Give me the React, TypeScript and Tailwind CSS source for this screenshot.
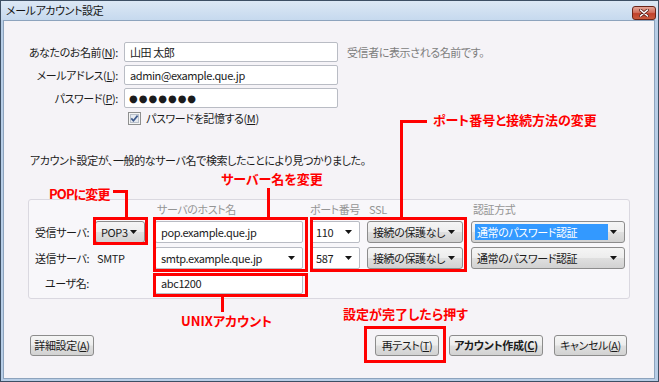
import React from 'react';

const JP = "font-['Noto_Sans_CJK_JP','Noto_Sans_CJK_SC',sans-serif] [font-feature-settings:'palt']";
const BTN =
  'bg-[linear-gradient(to_bottom,#f5f5f5_0%,#ededed_48%,#dfdfdf_52%,#d2d2d2_100%)] border border-[#8c8c8c] rounded-[3px]';
const BOX = 'bg-white border border-[#b9bcc4] rounded-[2px]';

function Arrow() {
  return (
    <svg width="7" height="4" viewBox="0 0 7 4" className="shrink-0">
      <path d="M0 0H7L3.5 4Z" fill="#151515" />
    </svg>
  );
}

function Combo({ text, className, plain }: { text: string; className: string; plain?: boolean }) {
  return (
    <div className={`${plain ? BOX : BTN} ${className} flex items-center justify-between pl-[5px] pr-[7px] whitespace-nowrap`}>
      <span>{text}</span>
      <Arrow />
    </div>
  );
}

function Button({ children, className }: { children: React.ReactNode; className: string }) {
  return (
    <div className={`${BTN} ${className} h-[21px] flex items-center justify-center whitespace-nowrap`}>{children}</div>
  );
}

export default function App() {
  return (
    <div className={`${JP} relative w-[659px] h-[382px] bg-[#b7cde6] border border-[#3d4f64] flex flex-col overflow-hidden text-[11px] tracking-[-0.4px] text-[#1b1b1b] whitespace-nowrap`}>
      {/* title bar */}
      <div className="h-[19px] shrink-0 flex items-center justify-between pl-[5px] pr-[2px] bg-[linear-gradient(to_bottom,#dce8f5,#c6d9ee)]">
        <span className="text-[11px] text-[#151515] leading-none">メールアカウント設定</span>
        <div className="w-[24px] h-[14px] mt-[4px] rounded-[3px] border border-[#6a2418] bg-[linear-gradient(to_bottom,#e3a597_0%,#d2705e_45%,#c0412c_55%,#c85a3c_100%)] flex items-center justify-center">
          <svg width="10" height="8" viewBox="0 0 10 8">
            <path d="M1.5 1L8.5 7M8.5 1L1.5 7" stroke="#5a2018" strokeWidth="3" strokeLinecap="round" />
            <path d="M1.5 1L8.5 7M8.5 1L1.5 7" stroke="#ffffff" strokeWidth="1.6" strokeLinecap="round" />
          </svg>
        </div>
      </div>

      {/* client area */}
      <div className="flex-1 ml-[2px] mr-[3px] mb-[2px] border border-[#8da3bd] bg-[#f5f3f7] flex flex-col">
        {/* account fields */}
        <div className="mt-[21px] grid grid-cols-[114px_214px_1fr] gap-x-[6px] gap-y-[3px] items-center">
          <div className="text-right">あなたのお名前(<u>N</u>):</div>
          <div className={`${BOX} h-[20px] flex items-center pl-[5px]`}>山田 太郎</div>
          <div className="pl-[3px] text-[#7d7d7d]">受信者に表示される名前です。</div>

          <div className="text-right">メールアドレス(<u>L</u>):</div>
          <div className={`${BOX} h-[20px] flex items-center pl-[5px]`}>admin@example.que.jp</div>
          <div />

          <div className="text-right">パスワード(<u>P</u>):</div>
          <div className={`${BOX} h-[20px] flex items-center pl-[4px] font-['DejaVu_Sans',sans-serif] text-[10px] tracking-[1px]`}>●●●●●●●</div>
          <div />

          <div />
          <div className="flex items-center gap-[5px] pl-[4px] h-[14px]">
            <svg width="13" height="13" viewBox="0 0 13 13" className="shrink-0">
              <rect x="0.5" y="0.5" width="12" height="12" fill="#f4f4f4" stroke="#8e8f8f" />
              <rect x="2.5" y="2.5" width="8" height="8" fill="#e6eaf0" stroke="#b9c0ca" />
              <path d="M3.3 6.4L5.4 8.8L9.6 3.6" fill="none" stroke="#3e5a8c" strokeWidth="1.7" />
            </svg>
            <span>パスワードを記憶する(<u>M</u>)</span>
          </div>
          <div />
        </div>

        <div className="mt-[27px] pl-[26px] leading-[16px]">
          アカウント設定が、一般的なサーバ名で検索したことにより見つかりました。
        </div>

        {/* server group */}
        <div className="mt-[31px] mx-[24px] h-[100px] border border-[#dad8e0] rounded-[3px] bg-[#f8f7fa] pt-[2px] pl-[6px]">
          <div className="grid grid-cols-[60px_60px_155px_57px_104px_154px] grid-rows-[15px_22px_22px_21px] gap-y-[4px] items-center">
            <div />
            <div />
            <div className="pl-[2px] text-[#959595]">サーバのホスト名</div>
            <div className="text-[#959595]">ポート番号</div>
            <div className="pl-[2px] text-[#959595]">SSL</div>
            <div className="pl-[2px] text-[#959595]">認証方式</div>

            <div>受信サーバ:</div>
            <Combo text="POP3" className="w-[50px] h-[22px]" />
            <div className={`${BOX} w-[148px] h-[22px] flex items-center pl-[5px]`}>pop.example.que.jp</div>
            <Combo text="110" plain className="w-[50px] h-[22px] pl-[2px]" />
            <Combo text="接続の保護なし" className="w-[96px] h-[22px]" />
            <div className={`${BTN} w-[154px] h-[22px] flex items-center justify-between pl-[3px] pr-[7px]`}>
              <span className="bg-[#3399ff] text-white w-[133px] h-[16px] flex items-center pl-[2px]">通常のパスワード認証</span>
              <Arrow />
            </div>

            <div>送信サーバ:</div>
            <div className="pl-[2px]">SMTP</div>
            <Combo text="smtp.example.que.jp" plain className="w-[148px] h-[22px]" />
            <Combo text="587" plain className="w-[50px] h-[22px] pl-[2px]" />
            <Combo text="接続の保護なし" className="w-[96px] h-[22px]" />
            <Combo text="通常のパスワード認証" className="w-[154px] h-[22px]" />

            <div className="pl-[10px]">ユーザ名:</div>
            <div />
            <div className={`${BOX} w-[148px] h-[21px] flex items-center pl-[5px]`}>abc1200</div>
            <div />
            <div />
            <div />
          </div>
        </div>

        {/* buttons */}
        <div className="mt-[36px] pl-[26px] pr-[27px] flex items-center">
          <Button className="w-[64px]">詳細設定(<u>A</u>)</Button>
          <div className="flex-1" />
          <Button className="w-[64px]">再テスト(<u>T</u>)</Button>
          <Button className="w-[94px] ml-[10px] font-bold">アカウント作成(<u>C</u>)</Button>
          <Button className="w-[73px] ml-[11px]">キャンセル(<u>A</u>)</Button>
        </div>
      </div>

      {/* annotations */}
      <div className="absolute left-[432px] top-[110px] text-[13px] tracking-normal font-bold text-[#ff0000] leading-[18px]">ポート番号と接続方法の変更</div>
      <div className="absolute left-[399px] top-[119px] w-[27px] h-[3px] bg-[#ff0000]" />
      <div className="absolute left-[399px] top-[119px] w-[3px] h-[99px] bg-[#ff0000]" />
      <div className="absolute left-[309px] top-[216px] w-[157px] h-[55px] border-[3px] border-[#ff0000]" />

      <div className="absolute left-[220px] top-[169px] text-[13px] tracking-normal font-bold text-[#ff0000] leading-[18px]">サーバー名を変更</div>
      <div className="absolute left-[266px] top-[187px] w-[3px] h-[30px] bg-[#ff0000]" />
      <div className="absolute left-[152px] top-[216px] w-[155px] h-[55px] border-[3px] border-[#ff0000]" />

      <div className="absolute left-[48px] top-[184px] text-[13px] tracking-[-0.9px] font-bold text-[#ff0000] leading-[18px]">POPに変更</div>
      <div className="absolute left-[112px] top-[189px] w-[15px] h-[3px] bg-[#ff0000]" />
      <div className="absolute left-[124px] top-[189px] w-[3px] h-[28px] bg-[#ff0000]" />
      <div className="absolute left-[92px] top-[216px] w-[55px] h-[28px] border-[3px] border-[#ff0000]" />

      <div className="absolute left-[152px] top-[272px] w-[155px] h-[24px] border-[3px] border-[#ff0000]" />
      <div className="absolute left-[220px] top-[295px] w-[3px] h-[16px] bg-[#ff0000]" />
      <div className="absolute left-[180px] top-[311px] text-[13px] tracking-normal font-bold text-[#ff0000] leading-[18px]">UNIXアカウント</div>

      <div className="absolute left-[342px] top-[304px] text-[13px] tracking-normal font-bold text-[#ff0000] leading-[18px]">設定が完了したら押す</div>
      <div className="absolute left-[363px] top-[325px] w-[82px] h-[37px] border-[3px] border-[#ff0000]" />
    </div>
  );
}
